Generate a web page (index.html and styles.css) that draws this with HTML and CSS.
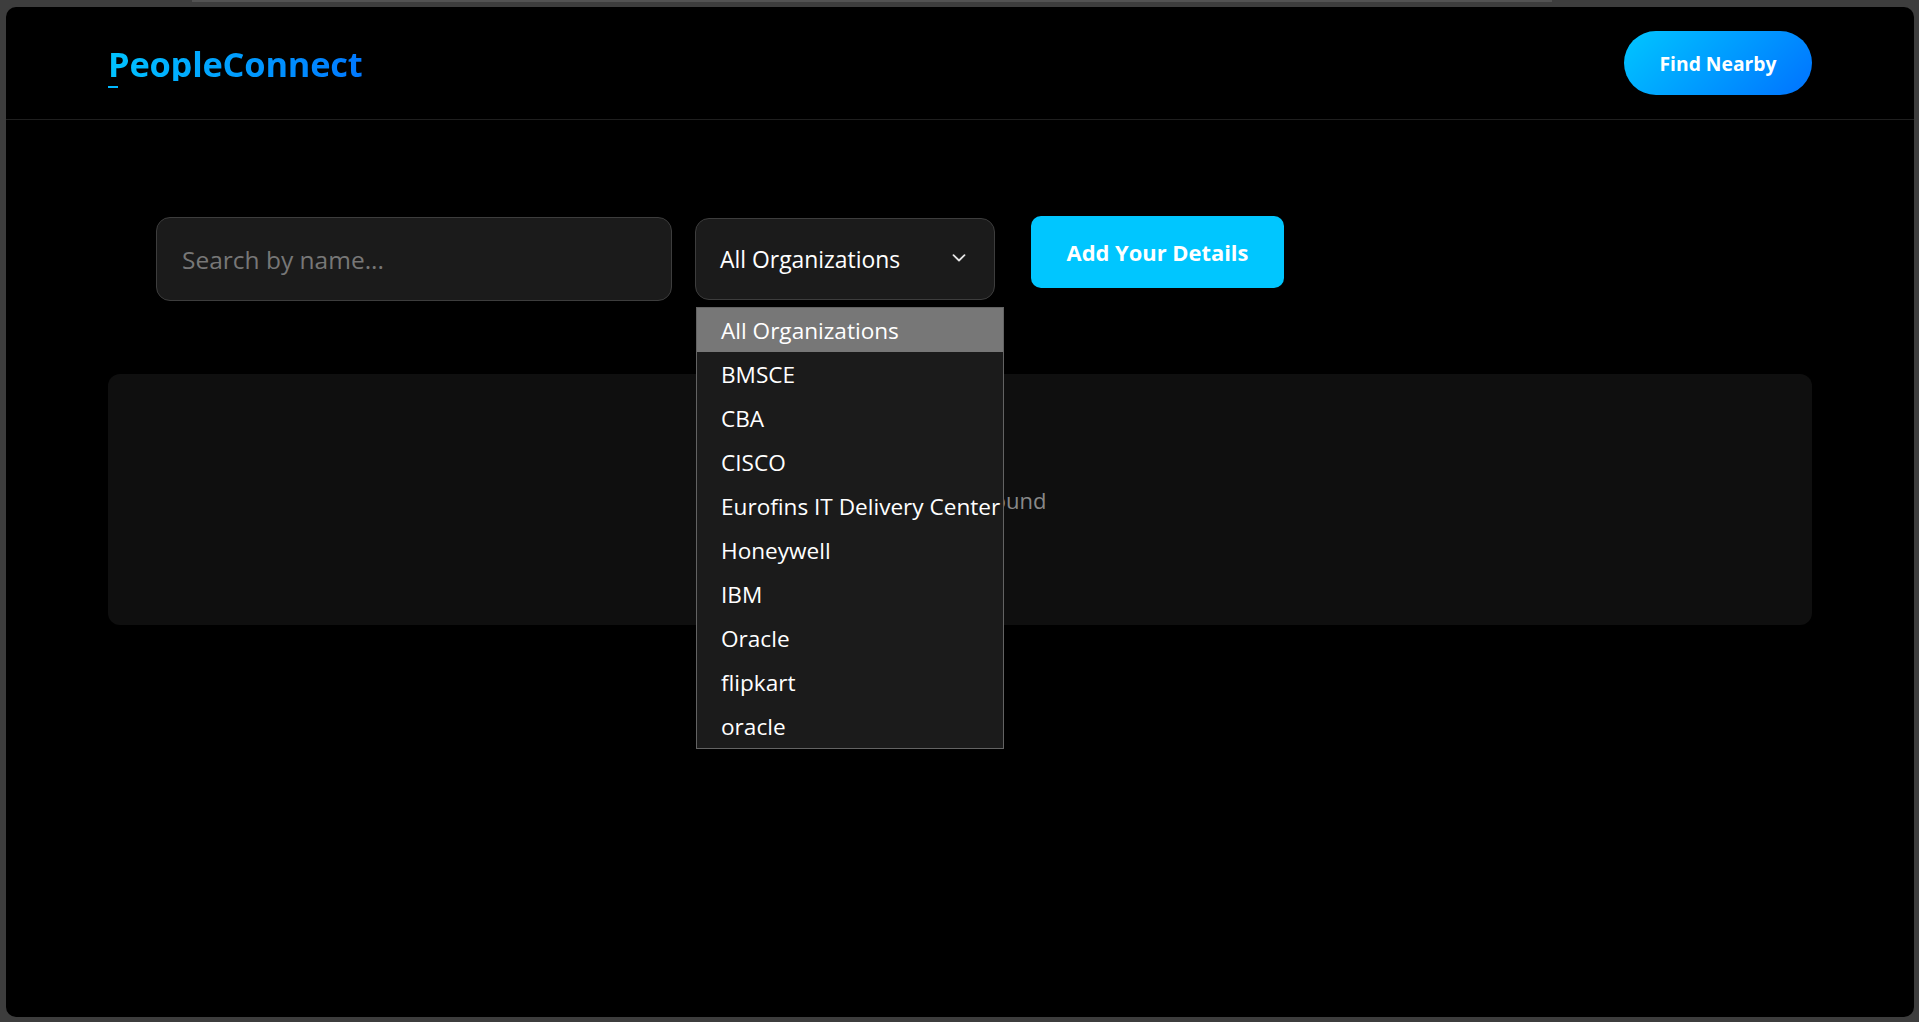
FILE: index.html
```html
<!DOCTYPE html>
<html lang="en">
<head>
<meta charset="utf-8">
<title>PeopleConnect</title>
<link rel="stylesheet" href="styles.css">
</head>
<body>
<div class="frame-strip"></div>
<div class="window">
  <header class="header">
    <a class="logo">PeopleConnect</a>
    <button class="nearby-btn">Find Nearby</button>
  </header>
  <main class="main">
    <div class="search-row">
      <input class="search-input" type="text" placeholder="Search by name...">
      <div class="org-select">
        <div class="org-select-box">
          <span class="org-select-value">All Organizations</span>
          <svg class="chevron" width="14" height="8" viewBox="0 0 14 8"><path d="M1.5 1.2 L7 6.5 L12.5 1.2" fill="none" stroke="#e6e6e6" stroke-width="1.8" stroke-linecap="round" stroke-linejoin="round"/></svg>
        </div>
        <ul class="org-list">
          <li class="org-option selected">All Organizations</li>
          <li class="org-option">BMSCE</li>
          <li class="org-option">CBA</li>
          <li class="org-option">CISCO</li>
          <li class="org-option">Eurofins IT Delivery Center</li>
          <li class="org-option">Honeywell</li>
          <li class="org-option">IBM</li>
          <li class="org-option">Oracle</li>
          <li class="org-option">flipkart</li>
          <li class="org-option">oracle</li>
        </ul>
      </div>
      <button class="add-btn">Add Your Details</button>
    </div>
    <section class="results">
      <p class="empty-text">No people found</p>
    </section>
  </main>
</div>
</body>
</html>
```

FILE: styles.css
```css
* {
  box-sizing: border-box;
}

html, body {
  margin: 0;
  padding: 0;
}

body {
  width: 1919px;
  height: 1022px;
  overflow: hidden;
  background: #3d3d3d;
  font-family: "Open Sans", "Noto Sans", sans-serif;
  color: #fff;
}

.frame-strip {
  height: 2px;
  width: 1360px;
  margin-left: 192px;
  background: #525252;
}

.window {
  margin: 5px 5px 0 6px;
  height: 1010px;
  background: #000;
  border-radius: 10px;
  overflow: hidden;
}

.header {
  height: 113px;
  border-bottom: 1px solid #1f1f1f;
  display: flex;
  align-items: center;
  justify-content: space-between;
  padding: 0 102px;
}

.logo {
  position: relative;
  font-size: 34.4px;
  font-weight: 700;
  letter-spacing: -0.2px;
  background: linear-gradient(90deg, #00c3ff, #0078ff);
  -webkit-background-clip: text;
  background-clip: text;
  color: transparent;
  line-height: 1;
  margin-top: 2px;
}

.logo::after {
  content: "";
  position: absolute;
  left: 0;
  bottom: -7px;
  width: 10px;
  height: 2px;
  background: #00b8ff;
}

.nearby-btn {
  height: 64px;
  width: 188px;
  border: none;
  border-radius: 32px;
  background: linear-gradient(135deg, #00c6ff, #0072ff);
  color: #fff;
  font-family: inherit;
  font-size: 19.3px;
  font-weight: 700;
  padding: 0;
}

.main {
  padding: 96px 102px 0;
}

.search-row {
  display: flex;
  align-items: flex-start;
  padding-left: 48px;
}

.search-input {
  width: 516px;
  height: 84px;
  margin-top: 1px;
  background: #1b1b1b;
  border: 1px solid #3d3d3d;
  border-radius: 14px;
  padding: 0 25px;
  font-family: inherit;
  font-size: 24.5px;
  color: #fff;
  outline: none;
}

.search-input::placeholder {
  color: #777;
}

.org-select {
  position: relative;
  margin-left: 23px;
  margin-top: 2px;
}

.org-select-box {
  width: 300px;
  height: 82px;
  background: #1b1b1b;
  border: 1px solid #3d3d3d;
  border-radius: 14px;
  display: flex;
  align-items: center;
  justify-content: space-between;
  padding: 0 28px 0 24px;
}

.org-select-value {
  font-size: 22.9px;
  color: #fff;
}

.chevron {
  display: block;
  margin-top: -2px;
}

.org-list {
  position: absolute;
  top: calc(100% + 7px);
  left: 1px;
  width: 308px;
  margin: 0;
  padding: 0;
  list-style: none;
  background: #1b1b1b;
  border: 1px solid #636363;
  z-index: 5;
}

.org-option {
  height: 44px;
  display: flex;
  align-items: center;
  padding-left: 24px;
  font-size: 22.6px;
  white-space: nowrap;
  color: #fff;
}

.org-option.selected {
  background: #777;
}

.add-btn {
  margin-left: 36px;
  width: 253px;
  height: 72px;
  border: none;
  border-radius: 10px;
  background: #00c6ff;
  color: #fff;
  font-family: inherit;
  font-size: 21.9px;
  font-weight: 700;
  padding: 0;
}

.results {
  margin-top: 73px;
  height: 251px;
  background: #0f0f0f;
  border-radius: 12px;
  display: flex;
  align-items: center;
  justify-content: center;
}

.empty-text {
  margin: 0;
  font-size: 22px;
  color: #888;
}
```
